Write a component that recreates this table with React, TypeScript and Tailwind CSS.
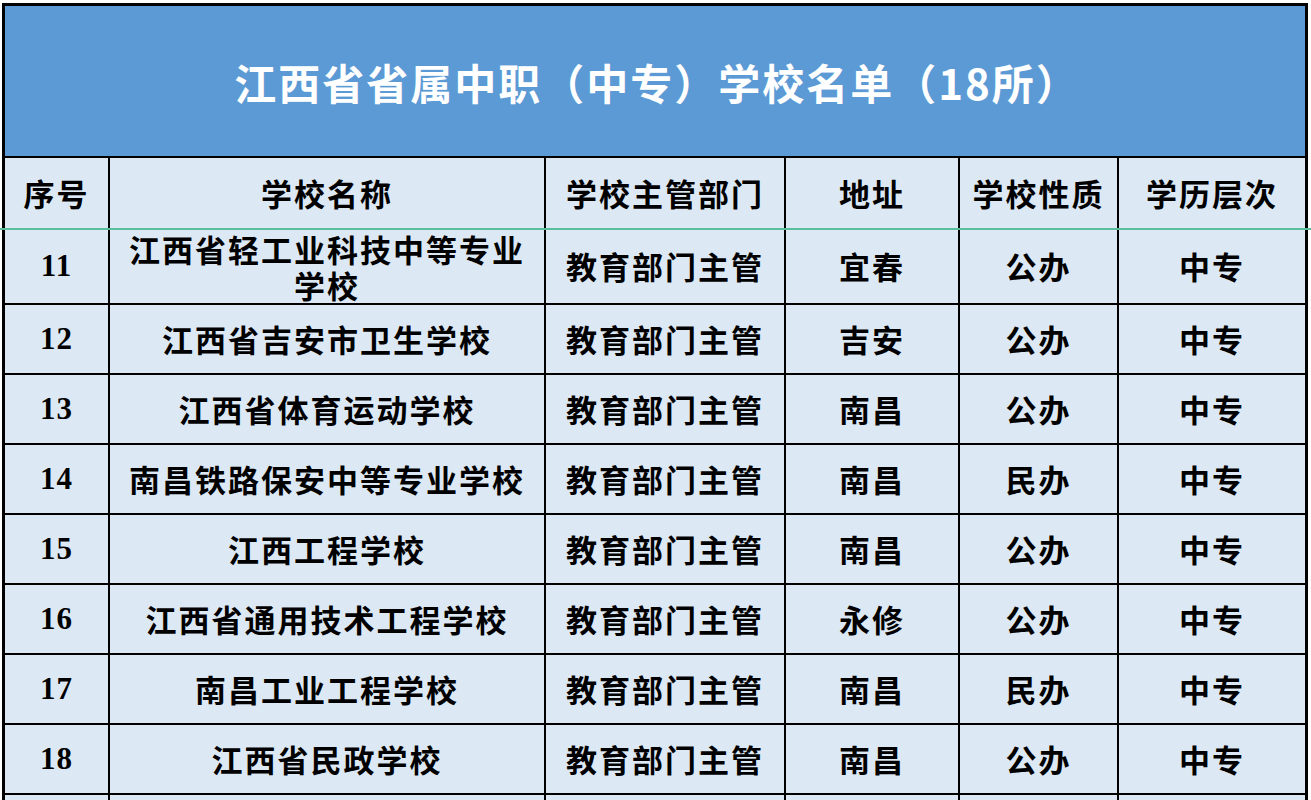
import React from "react";

const rows: { n: string; name: string[]; dept: string; addr: string; type: string; level: string }[] = [
  { n: "11", name: ["江西省轻工业科技中等专业", "学校"], dept: "教育部门主管", addr: "宜春", type: "公办", level: "中专" },
  { n: "12", name: ["江西省吉安市卫生学校"], dept: "教育部门主管", addr: "吉安", type: "公办", level: "中专" },
  { n: "13", name: ["江西省体育运动学校"], dept: "教育部门主管", addr: "南昌", type: "公办", level: "中专" },
  { n: "14", name: ["南昌铁路保安中等专业学校"], dept: "教育部门主管", addr: "南昌", type: "民办", level: "中专" },
  { n: "15", name: ["江西工程学校"], dept: "教育部门主管", addr: "南昌", type: "公办", level: "中专" },
  { n: "16", name: ["江西省通用技术工程学校"], dept: "教育部门主管", addr: "永修", type: "公办", level: "中专" },
  { n: "17", name: ["南昌工业工程学校"], dept: "教育部门主管", addr: "南昌", type: "民办", level: "中专" },
  { n: "18", name: ["江西省民政学校"], dept: "教育部门主管", addr: "南昌", type: "公办", level: "中专" },
];

const cjk = "font-['Noto_Sans_CJK_SC',sans-serif] font-bold text-black";
const cell = "bg-[#dce8f4] flex items-center justify-center text-center";
const cols = "grid grid-cols-[103px_434px_238px_172px_157px_1fr] gap-x-[2px]";

export default function App() {
  return (
    <div className="w-[1311px] h-[800px] overflow-hidden bg-white pt-[3px] pl-[2px] relative">
      <div className="w-[1306px] bg-black border-[3px] border-black flex flex-col gap-y-[2px]">
        <div className="h-[150px] bg-[#5b9ad5] flex items-center justify-center">
          <span className="font-['Noto_Sans_CJK_SC',sans-serif] font-bold text-white text-[42px] tracking-[2px] pl-[4px]">
            江西省省属中职（中专）学校名单（18所）
          </span>
        </div>
        <div className={`${cols} h-[70px]`}>
          {["序号", "学校名称", "学校主管部门", "地址", "学校性质", "学历层次"].map((h) => (
            <div key={h} className={cell}>
              <span className={`${cjk} text-[31px] tracking-[2px]`}>{h}</span>
            </div>
          ))}
        </div>
        {rows.map((r, i) => (
          <div key={r.n} className={`${cols} ${i === 0 ? "h-[73px]" : "h-[68px]"}`}>
            <div className={cell}>
              <span className="font-['Liberation_Serif',serif] font-bold text-[31px] text-black tracking-[1px]">{r.n}</span>
            </div>
            <div className={cell}>
              <span className={`${cjk} text-[31px] leading-[36px] tracking-[2px]`}>
                {r.name.map((l, j) => (
                  <React.Fragment key={l}>
                    {j > 0 && <br />}
                    {l}
                  </React.Fragment>
                ))}
              </span>
            </div>
            <div className={cell}>
              <span className={`${cjk} text-[31px] tracking-[2px]`}>{r.dept}</span>
            </div>
            <div className={cell}>
              <span className={`${cjk} text-[31px] tracking-[2px]`}>{r.addr}</span>
            </div>
            <div className={cell}>
              <span className={`${cjk} text-[31px] tracking-[2px]`}>{r.type}</span>
            </div>
            <div className={cell}>
              <span className={`${cjk} text-[31px] tracking-[2px]`}>{r.level}</span>
            </div>
          </div>
        ))}
        <div className={`${cols} h-[68px]`}>
          {[0, 1, 2, 3, 4, 5].map((k) => (
            <div key={k} className={cell} />
          ))}
        </div>
      </div>
      <div className="absolute left-0 top-[228px] w-[1311px] h-[2px] bg-[#5cbf9c]" />
    </div>
  );
}
